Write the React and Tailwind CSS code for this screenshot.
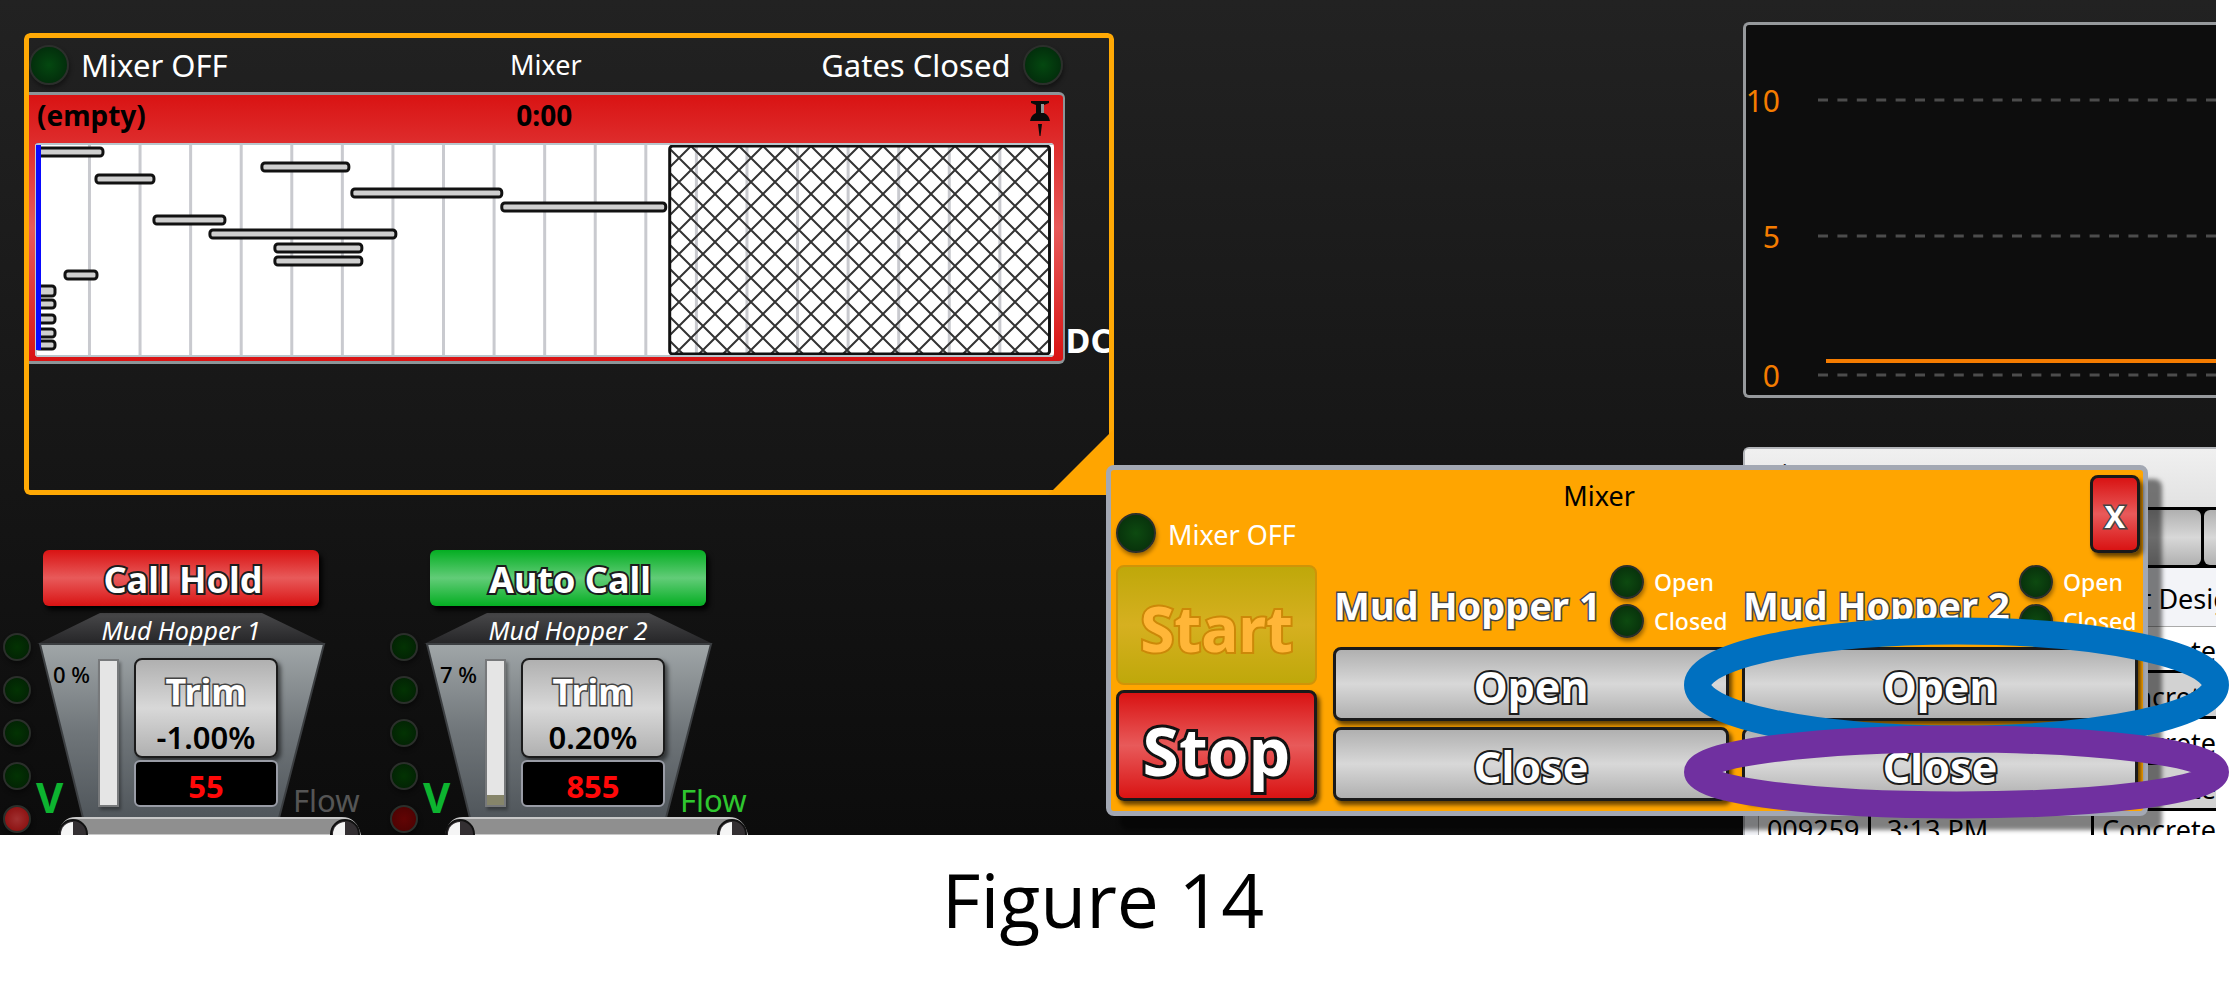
import React from "react";

const STEEL = "bg-[linear-gradient(#b0b0b0,#d8d8d8_50%,#b0b0b0)]";
const RED = "bg-[linear-gradient(#d91313,#e85a5a_50%,#d91313)]";
const GREEN = "bg-[linear-gradient(#04ae22,#62cc78_50%,#04ae22)]";
const OUTLINE = "[-webkit-text-stroke:4px_#1c1c1c] [paint-order:stroke_fill]";
const THIN_OUTLINE = "[-webkit-text-stroke:3px_#444] [paint-order:stroke_fill]";

function Led({ size = "size-10", tone = "bg-[radial-gradient(circle,#044810,#02240a)]" }) {
  return (
    <span
      className={`block shrink-0 rounded-full border-2 border-[#2b2f2b] shadow-[1px_3px_4px_#0006] ${size} ${tone}`}
    />
  );
}

const CHART_WIDTH = 1019;
const pct = (v) => `${(v / CHART_WIDTH) * 100}%`;

const BARS = [
  [0, 4, 69, 10],
  [226, 19, 89, 10],
  [60, 31, 60, 10],
  [316, 45, 152, 10],
  [466, 59, 166, 10],
  [118, 72, 73, 10],
  [174, 86, 188, 10],
  [239, 100, 89, 10],
  [239, 113, 89, 10],
  [29, 127, 34, 10],
  [0, 142, 21, 12],
  [0, 156, 21, 10],
  [0, 171, 21, 10],
  [0, 185, 21, 10],
  [0, 197, 21, 10],
];

function ScheduleChart() {
  return (
    <svg className="block h-[214px] w-full rounded-sm bg-white" role="img" aria-label="Mixer schedule">
      <defs>
        <pattern id="hatch" width="24" height="24" patternUnits="userSpaceOnUse" x="8" y="3">
          <path d="M-1 -1L25 25M25 -1L-1 25" stroke="#333" strokeWidth="2" />
        </pattern>
      </defs>
      {Array.from({ length: 19 }, (_, i) => (
        <line key={i} x1={pct(54.5 + i * 50.6)} x2={pct(54.5 + i * 50.6)} y1="0" y2="214" stroke="#c9cacf" strokeWidth="3" />
      ))}
      {BARS.map(([x, y, w, h], i) => (
        <rect key={i} x={pct(x + 1)} y={y + 1} width={pct(w - 2)} height={h - 2} rx="3" fill="#cfcfcf" stroke="#111" strokeWidth="3" />
      ))}
      <rect x="0" y="0" width="2" height="214" fill="#c5c8cc" />
      <rect x="1" y="0" width="5" height="207" fill="#0a0aff" />
      <rect x={pct(635)} y="3" width={pct(380)} height="208" rx="3" fill="url(#hatch)" stroke="#111" strokeWidth="3" />
      <path d="M0 1H2000M0 213H2000" stroke="#b9c6cc" strokeWidth="2" />
    </svg>
  );
}

function PinIcon() {
  return (
    <svg viewBox="0 0 20 36" className="h-9 w-5" aria-hidden="true">
      <path d="M1 0H19V2L14 4V12Q19 14 20 20H0Q1 14 6 12V4L1 2Z" fill="#0a0a0a" />
      <path d="M11 3H14V12H11Z" fill="#8d9797" />
      <path d="M8 23H12L10.500 35H9.500Z" fill="#0a0a0a" />
    </svg>
  );
}

function MixerPanel() {
  return (
    <section className="relative h-[462px] overflow-hidden rounded-md p-[5px] text-white">
      <header className="grid h-[54px] grid-cols-[1fr_auto_1fr] items-center pr-[46px]">
        <div className="flex items-center gap-3">
          <Led />
          <span className="text-[31px] leading-10">Mixer OFF</span>
        </div>
        <h2 className="text-[27px] leading-10">Mixer</h2>
        <div className="flex items-center justify-end gap-3">
          <span className="text-[31px] leading-10">Gates Closed</span>
          <Led />
        </div>
      </header>
      <div className="flex items-stretch">
        <div className={`min-w-0 flex-1 rounded-r-md border-y-[3px] border-r-2 border-[#8c9598] pr-[9px] pb-1 pl-[6px] ${RED}`}>
          <div className="grid h-[48px] grid-cols-[1fr_auto_1fr] items-start text-[28px] leading-[40px] font-bold text-black">
            <span className="pl-0.5">(empty)</span>
            <span>0:00</span>
            <button aria-label="Pin" className="justify-self-end pt-1.5 pr-1">
              <PinIcon />
            </button>
          </div>
          <ScheduleChart />
        </div>
        <div className="flex w-[44px] shrink-0 items-end pb-1 pl-px">
          <span className="text-[34px] leading-10 font-bold">DC</span>
        </div>
      </div>
      <div className="pointer-events-none absolute inset-0 rounded-md border-[5px] border-[#ffa905]" />
      <svg viewBox="0 0 66 66" className="absolute right-0 bottom-0 size-[66px]" aria-hidden="true">
        <path d="M66 0V66H0Z" fill="#ffa500" />
      </svg>
    </section>
  );
}

function HopperShape() {
  return (
    <svg viewBox="0 0 387 285" className="absolute inset-0 h-[285px] w-[387px] overflow-hidden" aria-hidden="true">
      <defs>
        <linearGradient id="lid" x1="0" y1="0" x2="0" y2="1">
          <stop offset="0" stopColor="#48484a" />
          <stop offset="1" stopColor="#252527" />
        </linearGradient>
        <linearGradient id="body" x1="0" y1="0" x2="0" y2="1">
          <stop offset="0" stopColor="#a0a6a8" />
          <stop offset="0.5" stopColor="#70767a" />
          <stop offset="1" stopColor="#50565b" />
        </linearGradient>
      </defs>
      <path d="M100 63H262L326 94H37Z" fill="url(#lid)" />
      <path d="M40 94H324L279 268H83Z" fill="url(#body)" stroke="#3c3f42" strokeWidth="2" />
      <path d="M59 285Q62 268 76 268H342Q356 268 360 285Z" fill="#8f8f8f" stroke="#c8c8c8" strokeWidth="2" />
      {[73, 345].map((x) => (
        <g key={x}>
          <circle cx={x} cy="284" r="14" fill="#332f32" stroke="#111" strokeWidth="2" />
          <path d={`M${x} 272A12 12 0 0 0 ${x} 296Z`} fill="#f5f5f5" />
        </g>
      ))}
    </svg>
  );
}

function Hopper({ name, mode, modeTone, level, fill, trim, reading, flowTone, alarmTone }) {
  const off = "bg-[radial-gradient(circle,#033303,#021e04)]";
  return (
    <section className="relative h-[285px] w-[387px] shrink-0 overflow-hidden">
      <HopperShape />
      <div className="relative">
        <button
          className={`ml-[43px] block h-[56px] w-[276px] rounded-md pt-1 pl-1 text-[36px] leading-[52px] font-bold text-white shadow-[3px_4px_5px_#000] ${modeTone} ${OUTLINE}`}
        >
          {mode}
        </button>
        <h3 className="ml-[43px] h-[39px] w-[276px] pt-2 text-center text-[25px] leading-[32px] text-white italic">{name}</h3>
        <div className="-mt-3 flex">
          <div className="flex w-[34px] flex-col items-center gap-[15px]">
            <Led size="size-7" tone={off} />
            <Led size="size-7" tone={off} />
            <Led size="size-7" tone={off} />
            <Led size="size-7" tone={off} />
            <Led size="size-7" tone={alarmTone} />
          </div>
          <div className="flex h-[183px] w-[64px] flex-col justify-between pt-[25px] pl-0.5">
            <span className="pr-2 text-right text-[22px] leading-8 font-medium text-black">{level} %</span>
            <span className="text-[42px] leading-[38px] font-bold text-[#0db430]">V</span>
          </div>
          <div className="mt-[26px] flex h-[148px] w-[21px] flex-col justify-end border-2 border-[#77797b] bg-[#e5e5e5] shadow-[2px_3px_3px_#0005]">
            <div className="bg-[#86856a]" style={{ height: `${fill}%` }} />
          </div>
          <div className="mt-[25px] ml-[15px] flex w-[144px] flex-col gap-[2px]">
            <button className={`flex h-[100px] flex-col items-center rounded-lg border-2 border-[#1b1b1b] shadow-[3px_3px_4px_#0008] ${STEEL}`}>
              <span className={`mt-2 text-[36px] leading-[48px] font-bold text-white ${THIN_OUTLINE}`}>Trim</span>
              <span className="text-[31px] leading-[42px] font-semibold text-black">{trim}</span>
            </button>
            <output className="h-[47px] rounded-md border-2 border-[#999ca6] bg-black text-center text-[31px] leading-[48px] font-bold text-[#ff0808]">
              {reading}
            </output>
          </div>
          <span className={`ml-[15px] self-end pb-2 text-[31px] leading-[50px] ${flowTone}`}>Flow</span>
        </div>
      </div>
    </section>
  );
}

function TrendChart() {
  const ticks = [
    ["10", 75],
    ["5", 211],
    ["0", 350],
  ];
  return (
    <svg
      className="block h-[376px] w-full rounded-l-md border-y-[3px] border-l-[3px] border-[#96999c] bg-[#0d0d0d] font-['Noto_Sans',sans-serif]"
      role="img"
      aria-label="Trend"
    >
      {ticks.map(([label, y]) => (
        <g key={label}>
          <text x="34" y={y + 12} textAnchor="end" fontSize="30" fill="#f57c00">
            {label}
          </text>
          <line x1="72" x2="100%" y1={y} y2={y} stroke="#4c4c4c" strokeWidth="3" strokeDasharray="10 9.400" />
        </g>
      ))}
      <line x1="80" x2="100%" y1="336" y2="336" stroke="#f57c00" strokeWidth="4" />
    </svg>
  );
}

const BATCHES = [
  ["009263", "3:22 PM", "Concrete"],
  ["009262", "3:20 PM", "Concrete"],
  ["009261", "3:17 PM", "Concrete"],
  ["009260", "3:15 PM", "Concrete"],
];

function BatchTable() {
  const cell = "overflow-hidden border-b-[3px] border-l-[3px] border-black pl-2 align-bottom whitespace-nowrap";
  return (
    <section className="overflow-hidden rounded-tl-md border-t-2 border-l-2 border-[#b4b6ba] bg-white text-black">
      <h2 className="h-[58px] bg-[linear-gradient(#f0f0f0,#e2e2e2)] pt-2 pl-3 text-[27px] leading-[36px]">Mixes</h2>
      <div className="flex h-[61px] gap-[3px] border-y-[3px] border-black bg-black">
        <button aria-label="Show batches" className={`flex-1 rounded-md ${STEEL}`} />
        <button aria-label="Show more" className={`w-[12px] rounded-l-md ${STEEL}`} />
      </div>
      <table className="w-full table-fixed border-separate border-spacing-0 text-[27px] leading-[38px]">
        <colgroup>
          <col className="w-[13px]" />
          <col className="w-[110px]" />
          <col />
          <col className="w-[125px]" />
        </colgroup>
        <thead>
          <tr className="h-[59px] bg-[#f3f4f8]">
            <th />
            <th className="overflow-hidden border-b border-[#aaa] pt-1 pl-2 text-left font-normal">Batch</th>
            <th className="overflow-hidden border-b border-[#aaa] pt-1 pl-4 text-left font-normal">Time</th>
            <th className="overflow-hidden border-b border-[#aaa] pt-1 pl-2 text-left font-normal whitespace-nowrap">Part Design</th>
          </tr>
        </thead>
        <tbody>
          {BATCHES.map(([id, time, design], i) => (
            <tr key={id} className={i % 2 ? "h-[46px] bg-[#d2d2d2]" : "h-[46px] bg-white"}>
              <td className="bg-[#f3f4f8]" />
              <td className={cell}>{id}</td>
              <td className={cell}>{time}</td>
              <td className={cell}>{design}</td>
            </tr>
          ))}
          <tr className="bg-white">
            <td className="bg-[#f3f4f8]" />
            <td className="border-l border-[#aaa] pl-2">
              <div className="h-[24px]">009259</div>
            </td>
            <td className="border-l-[3px] border-black pl-4">
              <div className="h-[24px]">3:13 PM</div>
            </td>
            <td className="overflow-hidden border-l-[3px] border-black pl-2">
              <div className="h-[24px]">Concrete</div>
            </td>
          </tr>
        </tbody>
      </table>
    </section>
  );
}

function GateControls({ name }) {
  const led = "bg-[radial-gradient(circle,#0d4a10,#062a0a)]";
  return (
    <div className="min-w-0 flex-1">
      <div className="flex h-[82px] items-start justify-between pr-0.5 pl-px">
        <h3 className={`text-[38px] leading-[80px] font-bold whitespace-nowrap text-white ${THIN_OUTLINE}`}>{name}</h3>
        <div className="flex flex-col gap-[5px] text-[23px] leading-[34px] font-medium">
          <div className="flex w-[117px] gap-[10px]">
            <Led size="size-[34px]" tone={led} />
            <span>Open</span>
          </div>
          <div className="flex w-[117px] gap-[10px]">
            <Led size="size-[34px]" tone={led} />
            <span>Closed</span>
          </div>
        </div>
      </div>
      <div className="flex flex-col gap-[6px]">
        {["Open", "Close"].map((label) => (
          <button
            key={label}
            className={`h-[74px] rounded-lg border-[3px] border-[#1a1a1a] pt-1.5 text-[43px] leading-[60px] font-bold text-white shadow-[3px_4px_4px_#0009] ${STEEL} ${OUTLINE}`}
          >
            {label}
          </button>
        ))}
      </div>
    </div>
  );
}

function MixerDialog() {
  return (
    <section
      role="dialog"
      aria-label="Mixer"
      className="absolute top-[465px] right-[82px] left-[49.6%] rounded-lg border-[5px] border-[#a3a8b3] bg-[#ffa500] px-[5px] pt-[5px] pb-[10px] text-white shadow-[14px_14px_4px_#00000080]"
    >
      <div className="-mr-0.5 mb-3 flex">
        <div className="flex-1">
          <h2 className="h-[38px] pr-2 text-center text-[27px] leading-[42px] text-black">Mixer</h2>
          <div className="flex items-center gap-3">
            <Led tone="bg-[radial-gradient(circle,#0d4a10,#062a0a)]" />
            <span className="pt-1 text-[27px] leading-9">Mixer OFF</span>
          </div>
        </div>
        <button
          aria-label="Close"
          className={`h-[78px] w-[50px] rounded-lg border-[3px] border-[#1a1a1a] pt-1 text-[31px] font-bold shadow-[3px_4px_4px_#0009] ${RED} ${THIN_OUTLINE}`}
        >
          X
        </button>
      </div>
      <div className="flex">
        <div className="mr-4 flex w-[201px] flex-col gap-[5px]">
          <button
            disabled
            className="h-[120px] rounded-lg border-2 border-[#cf9408] bg-[linear-gradient(#bfa80a,#d6b020_50%,#bfa80a)] pt-1.5 text-[62px] leading-[100px] font-bold text-[#ffb638] [-webkit-text-stroke:4px_#cc8808] [paint-order:stroke_fill]"
          >
            Start
          </button>
          <button
            className={`h-[111px] rounded-lg border-[3px] border-[#1a1a1a] pt-2 text-[66px] leading-[96px] font-bold shadow-[3px_4px_4px_#0009] [-webkit-text-stroke:6px_#111] [paint-order:stroke_fill] ${RED}`}
          >
            Stop
          </button>
        </div>
        <div className="flex flex-1 gap-[13px] [&_button]:w-full">
          <GateControls name="Mud Hopper 1" />
          <GateControls name="Mud Hopper 2" />
        </div>
      </div>
      <svg className="pointer-events-none absolute top-[147px] -right-[86px] h-[202px] w-[545px]" aria-hidden="true">
        <ellipse cx="50%" cy="68" rx="259" ry="54" fill="none" stroke="#0070c0" strokeWidth="27" />
        <ellipse cx="50%" cy="155" rx="259" ry="33" fill="none" stroke="#7030a0" strokeWidth="27" />
      </svg>
    </section>
  );
}

export default function App() {
  return (
    <main className="relative min-h-screen overflow-hidden bg-white font-['Noto_Sans',sans-serif]">
      <div className="mr-[14px] grid grid-cols-[50.250%_28.400%_minmax(0,1fr)] bg-[linear-gradient(#222,#0c0c0c)]">
        <div className="pt-[33px]">
          <div className="pl-6">
            <MixerPanel />
          </div>
          <div className="mt-[55px] flex">
            <Hopper
              name="Mud Hopper 1"
              mode="Call Hold"
              modeTone={RED}
              level={0}
              fill={0}
              trim="-1.00%"
              reading="55"
              flowTone="text-[#555]"
              alarmTone="bg-[radial-gradient(circle,#a03030,#860808)]"
            />
            <Hopper
              name="Mud Hopper 2"
              mode="Auto Call"
              modeTone={GREEN}
              level={7}
              fill={7}
              trim="0.20%"
              reading="855"
              flowTone="text-[#2fc72f]"
              alarmTone="bg-[radial-gradient(circle,#620404,#480202)]"
            />
          </div>
        </div>
        <div />
        <div className="flex h-[835px] flex-col gap-[49px] overflow-hidden pt-[22px]">
          <TrendChart />
          <BatchTable />
        </div>
      </div>
      <MixerDialog />
      <p className="pt-[12px] pr-6 text-center font-['Open_Sans',sans-serif] text-[75px] leading-[104px] text-black">Figure 14</p>
    </main>
  );
}
